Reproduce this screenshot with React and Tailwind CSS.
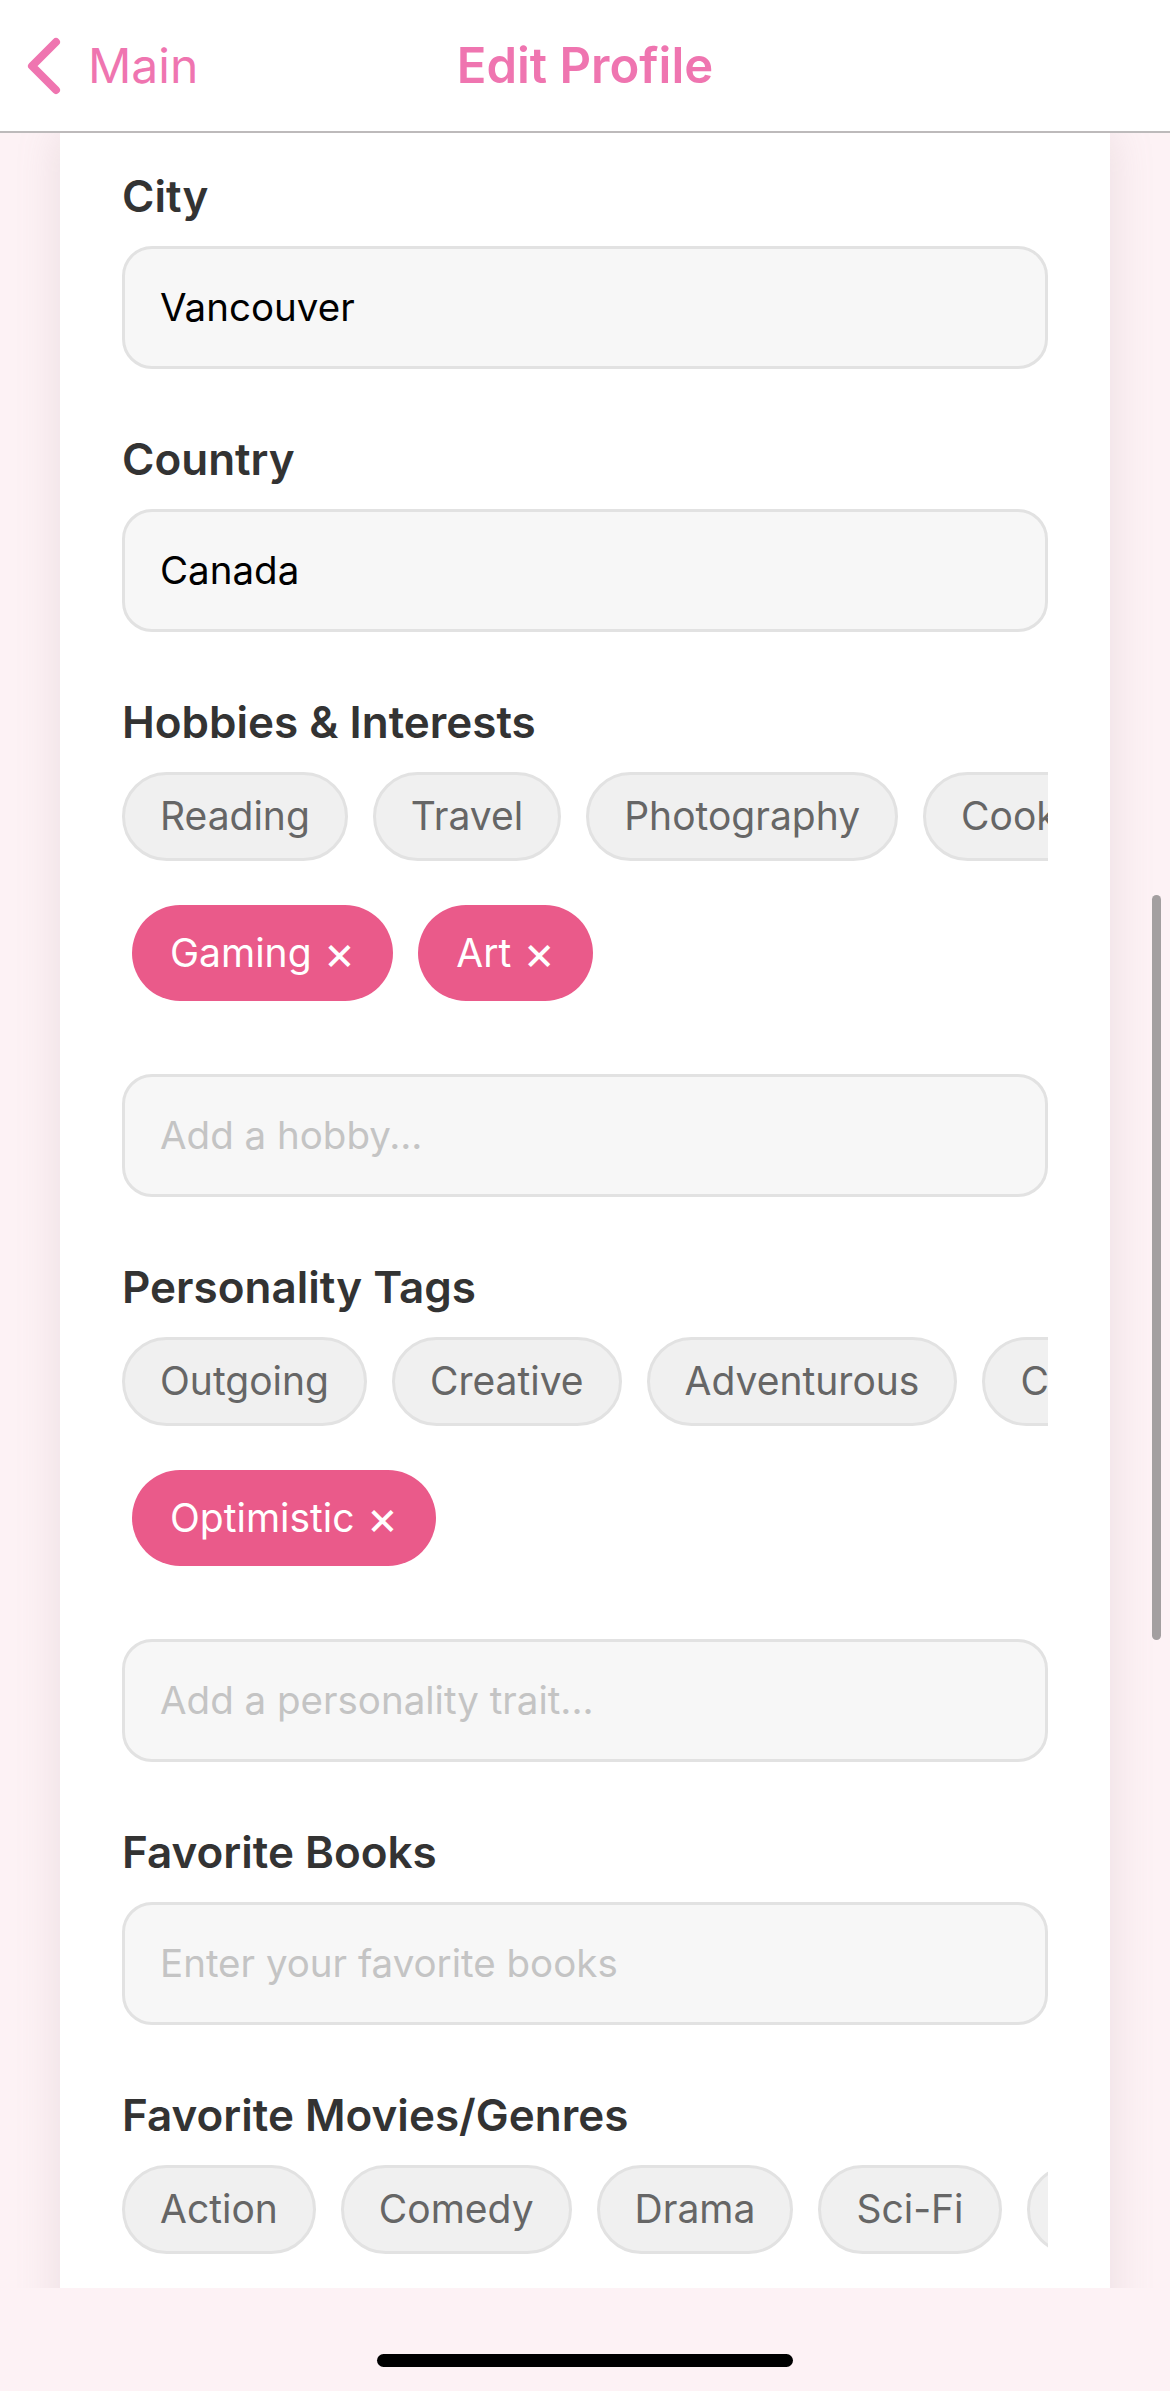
const FONT = { fontFamily: 'Inter, "Noto Sans", sans-serif' };

const HOBBIES = ['Reading', 'Travel', 'Photography', 'Cooking', 'Music', 'Sports'];
const TRAITS = ['Outgoing', 'Creative', 'Adventurous', 'Calm', 'Funny'];
const MOVIES = ['Action', 'Comedy', 'Drama', 'Sci-Fi', 'Horror', 'Romance'];

function Label({ children }) {
  return (
    <div className="text-[44px] leading-[52px] font-semibold text-[#333333] mb-[24px]">
      {children}
    </div>
  );
}

function Field({ value, placeholder }) {
  return (
    <div className="h-[123px] rounded-[30px] border-[3px] border-[#e2e2e2] bg-[#f7f7f7] px-[35px] flex items-center text-[38.5px]">
      {value ? (
        <span className="text-black">{value}</span>
      ) : (
        <span className="text-[#c4c4c4]">{placeholder}</span>
      )}
    </div>
  );
}

function ChipRow({ items }) {
  return (
    <div className="flex gap-[25px] overflow-hidden">
      {items.map((item) => (
        <div
          key={item}
          className="h-[89px] shrink-0 rounded-full border-[3px] border-[#e2e2e2] bg-[#f0f0f0] px-[35px] flex items-center text-[39px] text-[#666666]"
        >
          {item}
        </div>
      ))}
    </div>
  );
}

function Selected({ items }) {
  return (
    <div className="flex gap-[25px] ml-[10px] mt-[44px]">
      {items.map((item) => (
        <div
          key={item}
          className="h-[96px] rounded-full bg-[#ea5a8a] px-[38px] flex items-center text-[39px] text-white"
        >
          {item}
          <span className="ml-[12px] text-[48px] leading-none">×</span>
        </div>
      ))}
    </div>
  );
}

export default function App() {
  return (
    <div className="w-[1170px] h-[2391px] bg-[#fdf2f5] flex flex-col overflow-hidden" style={FONT}>
      {/* nav bar */}
      <div className="h-[133px] shrink-0 bg-white border-b-2 border-[#bdbabb] grid grid-cols-[1fr_auto_1fr] items-center">
        <div className="flex items-center pl-[20px]">
          <svg width="44" height="64" viewBox="0 0 44 64" fill="none">
            <path d="M36 8 L12 32 L36 56" stroke="#ef75b0" strokeWidth="8" strokeLinecap="round" strokeLinejoin="round" />
          </svg>
          <span className="ml-[24px] text-[48px] text-[#ef75b0]">Main</span>
        </div>
        <div className="text-[49px] font-semibold text-[#ef75b0]">Edit Profile</div>
        <div />
      </div>

      {/* scroll area */}
      <div className="relative h-[2155px] shrink-0 overflow-hidden">
        <div className="mx-[60px] bg-white shadow-[0_0_40px_rgba(170,140,150,0.22)] px-[62px] pt-[37px] pb-[80px] flex flex-col gap-[64px]">
          <div>
            <Label>City</Label>
            <Field value="Vancouver" />
          </div>
          <div>
            <Label>Country</Label>
            <Field value="Canada" />
          </div>
          <div>
            <Label>Hobbies &amp; Interests</Label>
            <ChipRow items={HOBBIES} />
            <Selected items={['Gaming', 'Art']} />
            <div className="mt-[73px]">
              <Field placeholder="Add a hobby..." />
            </div>
          </div>
          <div>
            <Label>Personality Tags</Label>
            <ChipRow items={TRAITS} />
            <Selected items={['Optimistic']} />
            <div className="mt-[73px]">
              <Field placeholder="Add a personality trait..." />
            </div>
          </div>
          <div>
            <Label>Favorite Books</Label>
            <Field placeholder="Enter your favorite books" />
          </div>
          <div>
            <Label>Favorite Movies/Genres</Label>
            <ChipRow items={MOVIES} />
          </div>
        </div>
        {/* scroll indicator */}
        <div className="absolute right-[9px] top-[762px] w-[9px] h-[745px] rounded-full bg-[#a39fa0]" />
      </div>

      {/* home indicator */}
      <div className="flex-1 flex justify-center pt-[66px]">
        <div className="w-[416px] h-[13px] rounded-full bg-black" />
      </div>
    </div>
  );
}
